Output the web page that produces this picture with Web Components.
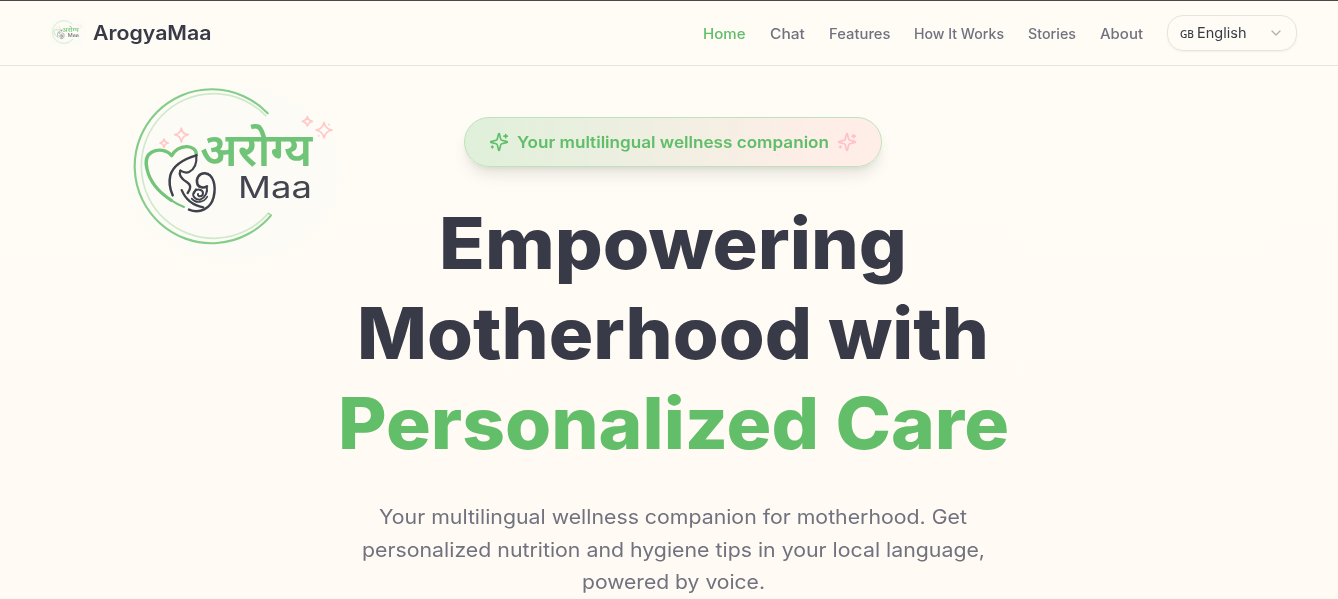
<!DOCTYPE html>
<html lang="en">
<head>
<meta charset="utf-8">
<title>ArogyaMaa</title>
<style>
html,body{margin:0;height:100%;overflow:hidden}
body{font-family:Inter,"Open Sans",sans-serif;background:#fffcf5;color:#383a47}
</style>
</head>
<body>
<arogya-app></arogya-app>
<script>
class Base extends HTMLElement {
  constructor(){ super(); this.attachShadow({mode:'open'}); }
  connectedCallback(){ this.shadowRoot.innerHTML = this.render(); if(this.ready) this.ready(); }
}

/* One line of text stretched to an exact advance width. */
class FitText extends Base {
  render(){ return `<style>:host{display:inline-block;white-space:nowrap;text-align:left;width:${this.getAttribute('width')}px}
    span{display:inline-block;transform-origin:0 50%}</style><span><slot></slot></span>`; }
  ready(){
    const s=this.shadowRoot.querySelector('span'), w=s.getBoundingClientRect().width;
    if(w) s.style.transform=`scaleX(${this.getAttribute('width')/w})`;
  }
}
customElements.define('fit-text',FitText);

class SparkleIcon extends Base {
  render(){ return `<style>:host{display:block;width:20px;height:20px}svg{display:block}</style>
  <svg width="20" height="20" viewBox="0 0 24 24" fill="none" stroke="currentColor" stroke-width="2" stroke-linecap="round" stroke-linejoin="round"><path d="M9.937 15.5A2 2 0 0 0 8.5 14.063l-6.135-1.582a.5.5 0 0 1 0-.962L8.5 9.936A2 2 0 0 0 9.937 8.5l1.582-6.135a.5.5 0 0 1 .963 0L14.063 8.5A2 2 0 0 0 15.5 9.937l6.135 1.581a.5.5 0 0 1 0 .964L15.5 14.063a2 2 0 0 0-1.437 1.437l-1.582 6.135a.5.5 0 0 1-.963 0z"/><path d="M20 3v4M22 5h-4M4 17v2M5 18H3"/></svg>`; }
}
customElements.define('sparkle-icon',SparkleIcon);

class BrandLogo extends Base {
  render(){ return `<style>:host{display:block}svg{display:block;width:100%;height:100%;overflow:visible}</style>
  <svg viewBox="30 48 690 528" fill="none" stroke-linecap="round" stroke-linejoin="round">
    <path d="M473 130A231 231 0 1 0 483 436" stroke="#84cd89" stroke-width="6.5"/>
    <path d="M467 137A217 217 0 1 0 475 430" stroke="#cfeacb" stroke-width="5"/>
    <path d="M475 430L483 436" stroke="#9bd69c" stroke-width="4"/>
    <g stroke="#72c479">
      <path d="M259 254C260 240 246 229 229 230C211 231 194 241 185 257C171 240 145 236 126 246C108 256 106 277 111 297C120 338 153 371 184 391" stroke-width="10"/>
      <path d="M184 391Q202 403 222 411" stroke-width="6"/>
    </g>
    <g stroke="#3f414c">
      <path d="M259 256C225 266 190 285 181 316C176 337 180 358 188 376" stroke-width="7.5"/>
      <path d="M259 256C261 279 253 298 237 306C228 310 220 307 211 302" stroke-width="6.5"/>
      <path d="M211 302C205 316 217 328 231 337C244 345 243 356 233 369" stroke-width="7"/>
      <path d="M215 360C226 387 248 406 280 412" stroke-width="6.5"/>
      <path d="M237 419C269 432 302 417 311 381C319 346 310 313 285 310C267 309 257 326 262 342C266 353 281 355 291 349" stroke-width="7.5"/>
      <path d="M290 350C294 365 287 382 271 389C255 390 245 377 252 366C260 355 279 357 279 370C278 382 262 381 264 372" stroke-width="6"/>
      <path d="M245 386C258 401 281 399 292 380" stroke-width="5"/>
      <path d="M258 358L252 369" stroke-width="6"/>
    </g>
    <g stroke="#ffc9c8" stroke-width="5">
      <path d="M214 174Q217 193 235 194Q217 197 214 216Q211 197 194 194Q211 192 214 174Z"/>
      <path d="M162 207Q164 218 175 219Q164 221 162 232Q160 221 150 219Q160 217 162 207Z"/>
      <path d="M592 140Q595 151 607 154Q595 157 592 168Q589 157 577 154Q589 151 592 140Z"/>
      <path d="M642 157Q646 177 666 180Q646 184 642 204Q638 184 618 180Q638 177 642 157Z"/>
      <path d="M657 163v1M626 197v1"/>
    </g>
    <text x="270" y="288" font-family="'Noto Sans Devanagari','Noto Sans','Lohit Devanagari',sans-serif" font-weight="600" font-size="139" textLength="337" lengthAdjust="spacingAndGlyphs" fill="#70c478">अरोग्य</text>
    <text x="384" y="384" font-family="Inter,sans-serif" font-weight="400" font-size="89" textLength="222" lengthAdjust="spacingAndGlyphs" fill="#42444f">Maa</text>
  </svg>`; }
}
customElements.define('brand-logo',BrandLogo);

class LanguageSelect extends Base {
  render(){ return `<style>
  :host{display:flex;box-sizing:border-box;width:130px;height:36px;margin-left:24px;padding:0 14px 0 12px;align-items:center;border:1px solid #e7e4de;border-radius:16px;box-shadow:0 1px 2px #0000000d;font-size:14px;line-height:20px;color:#383a47}
  .cc{font:500 10px/20px "Noto Sans","Open Sans",sans-serif;margin:2px 3px 0 0}
  svg{margin-left:auto;color:#b3b2b3}</style>
  <fit-text class="cc" width="14">GB</fit-text><fit-text width="49.5">English</fit-text>
  <svg width="16" height="16" viewBox="0 0 24 24" fill="none" stroke="currentColor" stroke-width="2" stroke-linecap="round" stroke-linejoin="round" style="margin-right:-2px"><path d="m6 9 6 6 6-6"/></svg>`; }
}
customElements.define('language-select',LanguageSelect);

class NavLink extends Base {
  render(){ return `<style>:host{display:block;font-size:14px;line-height:20px;font-weight:500;color:#71727f}:host([active]){color:#60be6a}</style>
  <fit-text width="${this.getAttribute('width')}">${this.getAttribute('label')}</fit-text>`; }
}
customElements.define('nav-link',NavLink);

class SiteHeader extends Base {
  render(){
    const links=[['Home',42.5],['Chat',34.8],['Features',61.5],['How It Works',90],['Stories',48],['About',43]];
    return `<style>
    :host{display:flex;box-sizing:border-box;height:66px;padding:0 41px 0 50px;border-top:1px solid #4a474b;border-bottom:1px solid #e7e4dc;align-items:center;background:#fffcf5}
    .brand{display:flex;align-items:center;gap:8px;font-size:20px;font-weight:600;line-height:28px;color:#383a47}
    .mark{width:34.5px;height:26.4px;background:#fdfbf6;opacity:.85}
    nav{display:flex;gap:24px;margin-left:auto;padding-top:1px}</style>
    <div class="brand"><brand-logo class="mark"></brand-logo><fit-text width="118.5">ArogyaMaa</fit-text></div>
    <nav>${links.map(([l,w],i)=>`<nav-link label="${l}" width="${w}"${i?'':' active'}></nav-link>`).join('')}</nav>
    <language-select></language-select>`; }
}
customElements.define('site-header',SiteHeader);

class HeroBadge extends Base {
  render(){ return `<style>
  :host{display:flex;box-sizing:border-box;width:418px;height:50px;padding:0 24px;align-items:center;gap:8px;border:1px solid #c0e2bb;border-radius:25px;background:linear-gradient(90deg,#dff0da,#ffeee8 88%);box-shadow:0 10px 15px -3px #0000001a,0 4px 6px -4px #0000001a;color:#60be6a;font-size:16px;line-height:24px;font-weight:600}
  .pink{color:#ffc0c6;margin-left:auto}</style>
  <sparkle-icon></sparkle-icon><fit-text width="312"><slot></slot></fit-text><sparkle-icon class="pink"></sparkle-icon>`; }
}
customElements.define('hero-badge',HeroBadge);

class HeroSection extends Base {
  render(){ return `<style>
  :host{display:flex;box-sizing:border-box;flex-direction:column;align-items:center;position:relative;height:533px;padding:51px 0 0 8px;overflow:hidden;background:linear-gradient(180deg,#fffcf5,#fffaf4)}
  .glow{position:absolute;left:114px;top:12px;width:238px;height:190px;border-radius:50%;background:radial-gradient(closest-side,#fdfbf6 82%,#fdfbf600)}
  .logo{position:absolute;left:120px;top:20px;width:230px;height:176px;filter:blur(.45px)}
  h1{margin:31px 0 0;font-size:71px;line-height:90px;font-weight:800;color:#383a47}
  h1 fit-text,p fit-text{display:block;margin:0 auto}
  .green{color:#62be69}
  p{margin:33px 0 0;font-size:20px;line-height:32.5px;font-weight:400;color:#71727f}</style>
  <div class="glow"></div><brand-logo class="logo"></brand-logo>
  <hero-badge>Your multilingual wellness companion</hero-badge>
  <h1><fit-text width="468">Empowering</fit-text><fit-text width="632">Motherhood with</fit-text><fit-text class="green" width="671">Personalized Care</fit-text></h1>
  <p><fit-text width="588">Your multilingual wellness companion for motherhood. Get</fit-text><fit-text width="623">personalized nutrition and hygiene tips in your local language,</fit-text><fit-text width="183">powered by voice.</fit-text></p>`; }
}
customElements.define('hero-section',HeroSection);

class ArogyaApp extends Base {
  render(){ return `<style>:host{display:flex;flex-direction:column;height:599px}</style><site-header></site-header><hero-section></hero-section>`; }
}
customElements.define('arogya-app',ArogyaApp);
</script>
</body>
</html>
